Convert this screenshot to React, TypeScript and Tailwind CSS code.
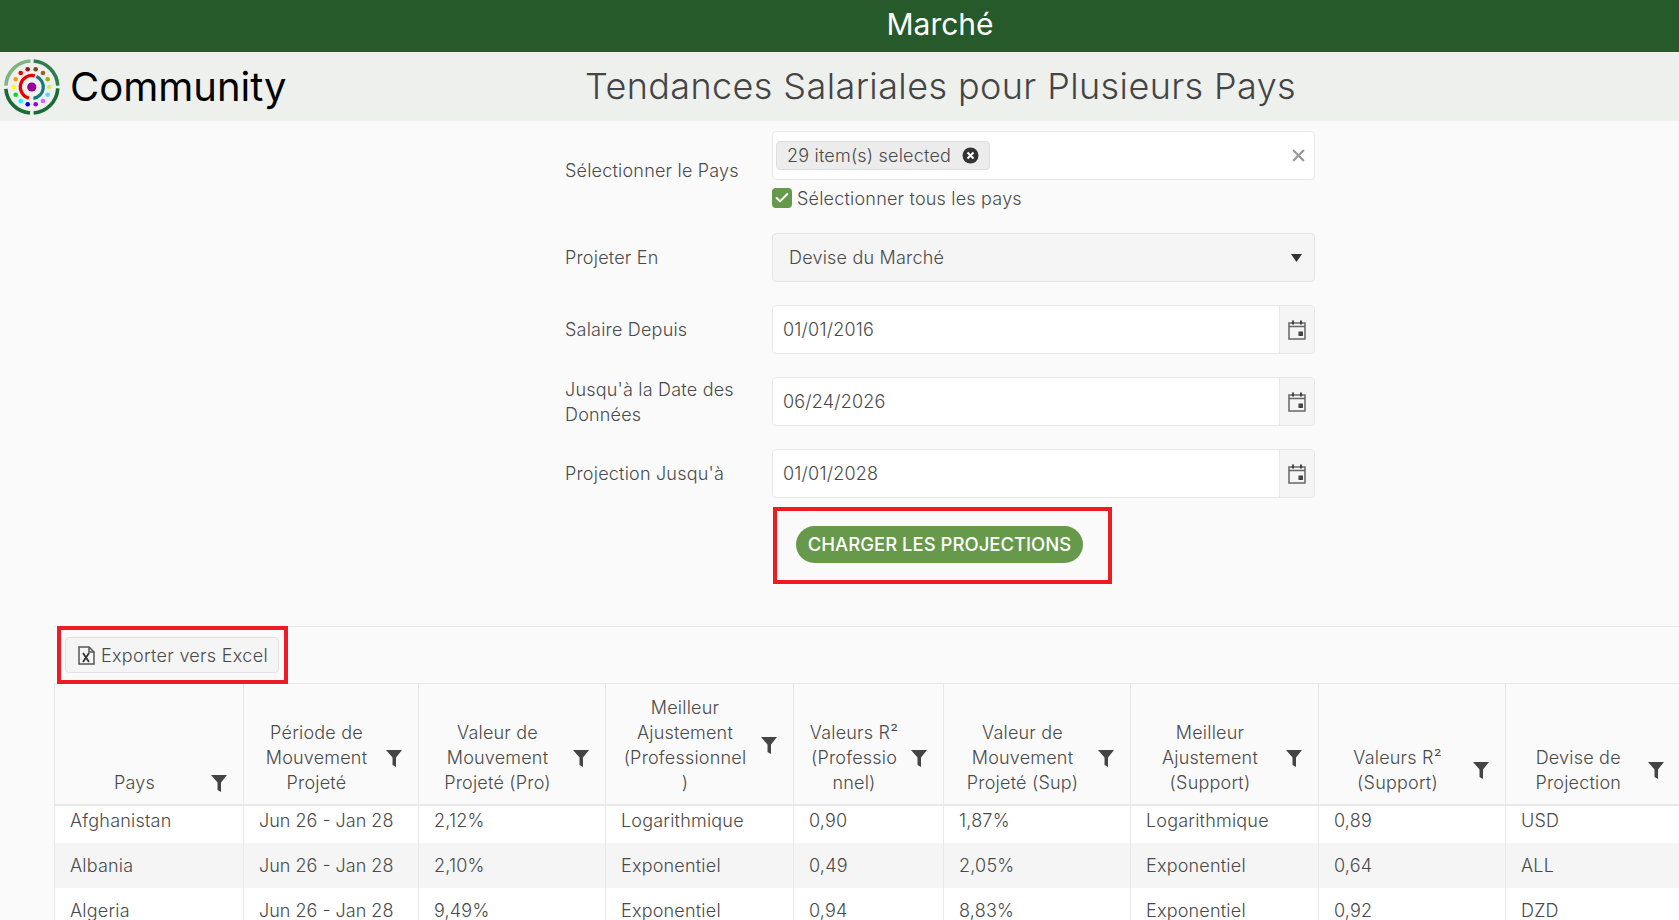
import React from "react";
import { Check, X } from "lucide-react";

const columns = [
    { width: "w-[189px]", lines: ["Pays"] },
    { width: "w-[175px]", lines: ["Période de", "Mouvement", "Projeté"] },
    { width: "w-[187px]", lines: ["Valeur de", "Mouvement", "Projeté (Pro)"] },
    { width: "w-[188px]", lines: ["Meilleur", "Ajustement", "(Professionnel", ")"] },
    { width: "w-[150px]", lines: ["Valeurs R²", "(Professio", "nnel)"] },
    { width: "w-[187px]", lines: ["Valeur de", "Mouvement", "Projeté (Sup)"] },
    { width: "w-[188px]", lines: ["Meilleur", "Ajustement", "(Support)"] },
    { width: "w-[187px]", lines: ["Valeurs R²", "(Support)"] },
    { width: "w-[174px]", lines: ["Devise de", "Projection"] },
];

const rows = [
    ["Afghanistan", "Jun 26 - Jan 28", "2,12%", "Logarithmique", "0,90", "1,87%", "Logarithmique", "0,89", "USD"],
    ["Albania", "Jun 26 - Jan 28", "2,10%", "Exponentiel", "0,49", "2,05%", "Exponentiel", "0,64", "ALL"],
    ["Algeria", "Jun 26 - Jan 28", "9,49%", "Exponentiel", "0,94", "8,83%", "Exponentiel", "0,92", "DZD"],
];

const arc = (r: number, from: number, to: number) => {
    const pt = (a: number) => {
        const rad = ((a - 90) * Math.PI) / 180;
        return `${(31.8 + r * Math.cos(rad)).toFixed(2)} ${(37 + r * Math.sin(rad)).toFixed(2)}`;
    };
    return `M${pt(from)} A${r} ${r} 0 ${to - from > 180 ? 1 : 0} 1 ${pt(to)}`;
};

const dots = [
    [27.7, 19.3, "#8b1a1a"],
    [35.7, 19.3, "#7a4a10"],
    [43, 23, "#8f6a1e"],
    [47.7, 29.3, "#99b300"],
    [49.3, 37, "#c8f060"],
    [47.7, 44.7, "#66ccff"],
    [43, 51, "#cc66ff"],
    [35.7, 54.3, "#9900cc"],
    [27.7, 54.3, "#0000ee"],
    [20.7, 51, "#00ffff"],
    [15.7, 44.7, "#00dd22"],
    [13.7, 37, "#ffff00"],
    [15.7, 29.3, "#ff9900"],
    [20.7, 23, "#ee0000"],
] as const;

const Logo = () => (
    <svg width="56" height="56" viewBox="4 9 56 56" className="shrink-0">
        <g fill="none" strokeWidth="3.6">
            <path d={arc(26, 4, 87)} stroke="#2f7d4c" />
            <path d={arc(26, 93, 176)} stroke="#1c6b36" />
            <path d={arc(26, 184, 266)} stroke="#1c6b36" />
            <path d={arc(26, 273, 357)} stroke="#7fb580" />
            <path d={arc(11.5, 195, 375)} stroke="#e60000" strokeWidth="3.2" />
            <path d={arc(11.5, 24, 172)} stroke="#14787a" strokeWidth="3.2" />
        </g>
        {dots.map(([cx, cy, fill]) => (
            <circle key={fill} cx={cx} cy={cy} r="2.3" fill={fill} />
        ))}
        <circle cx="31.8" cy="37" r="4.6" fill="#960096" />
    </svg>
);

const FilterIcon = () => (
    <svg width="16" height="18" viewBox="0 0 16 18" className="shrink-0" fill="#444444">
        <path d="M0 1h16L10 8.500V18l-3.500-2V8.500z" />
    </svg>
);

const CalendarIcon = () => (
    <svg width="18" height="20" viewBox="0 0 18 20" fill="none">
        <rect x="1" y="3" width="16" height="16" stroke="#666666" strokeWidth="1.500" />
        <path d="M1 6.500h16" stroke="#666666" strokeWidth="1.500" />
        <path d="M5 0.500v4M13 0.500v4" stroke="#444444" strokeWidth="2" />
        <rect x="10.500" y="11.500" width="4.500" height="4.500" fill="#444444" />
    </svg>
);

const ExcelIcon = () => (
    <svg width="17" height="19" viewBox="0 0 17 19" fill="none" className="shrink-0">
        <path d="M1 1h10l5 5v12H1z" stroke="#555555" strokeWidth="1.500" />
        <path d="M11 1v5h5" stroke="#555555" strokeWidth="1.500" />
        <path d="M5 7l6 9M11 7l-6 9" stroke="#333333" strokeWidth="1.800" />
    </svg>
);

const DateField = ({ value }: { value: string }) => (
    <div className="flex h-[49px] w-[543px] items-stretch overflow-hidden rounded border border-[#e8e8e8] bg-white">
        <div className="flex flex-1 items-center pl-[10px]">{value}</div>
        <div className="flex w-[35px] items-center justify-center border-l border-[#e8e8e8] bg-[#f5f5f5]">
            <CalendarIcon />
        </div>
    </div>
);

const App = () => {
    return (
        <div className="h-[920px] w-[1679px] overflow-hidden bg-[#fafafa] font-['Inter',sans-serif] text-[18px] font-light leading-[25px] tracking-[0.2px] text-[#4a4a4a]">
            <div className="flex h-[52px] items-center justify-center bg-[#265a2b] pb-[3px] pl-[201px] text-[30px] font-normal tracking-normal text-white">
                Marché
            </div>
            <div className="flex h-[69px] items-center bg-[#eef0ed]">
                <div className="flex w-[290px] items-center pl-1 text-[40px] font-normal tracking-normal text-black">
                    <Logo />
                    <span className="ml-[10px]">Community</span>
                </div>
                <div className="flex-1 pr-[88px] text-center text-[36px] tracking-[0.4px] text-[#444444]">
                    Tendances Salariales pour Plusieurs Pays
                </div>
            </div>

            <div className="ml-[565px] flex w-[750px] flex-col pt-[10px]">
                <div className="flex items-center">
                    <div className="w-[207px] pt-[2px]">Sélectionner le Pays</div>
                    <div className="w-[543px]">
                        <div className="flex h-[49px] items-center rounded border border-[#e8e8e8] bg-white pl-[3px] pr-[6px]">
                            <div className="flex h-[29px] w-[214px] items-center rounded border border-[#dddddd] bg-[#ececec] pl-[10px]">
                                <span>29 item(s) selected</span>
                                <svg width="17" height="17" viewBox="0 0 17 17" className="ml-auto mr-[10px]">
                                    <circle cx="8.500" cy="8.500" r="8" fill="#333333" />
                                    <path d="M5.500 5.500l6 6M11.500 5.500l-6 6" stroke="white" strokeWidth="2" />
                                </svg>
                            </div>
                            <X className="ml-auto text-[#999999]" size={19} strokeWidth={3} />
                        </div>
                        <div className="mt-2 flex h-5 items-center">
                            <div className="flex h-5 w-5 items-center justify-center rounded bg-[#66994a]">
                                <Check className="text-white" size={16} strokeWidth={3} />
                            </div>
                            <span className="ml-[5px]">Sélectionner tous les pays</span>
                        </div>
                    </div>
                </div>

                <div className="mt-[25px] flex h-[49px] items-center">
                    <div className="w-[207px]">Projeter En</div>
                    <div className="flex h-[49px] w-[543px] items-center rounded border border-[#e4e4e4] bg-[#f5f5f5] pl-4 pr-3">
                        Devise du Marché
                        <svg width="11" height="8" viewBox="0 0 11 8" className="ml-auto">
                            <path d="M0 0h11L5.500 8z" fill="#333333" />
                        </svg>
                    </div>
                </div>

                <div className="mt-[23px] flex h-[49px] items-center">
                    <div className="w-[207px]">Salaire Depuis</div>
                    <DateField value="01/01/2016" />
                </div>

                <div className="mt-[23px] flex h-[49px] items-center">
                    <div className="w-[207px] pt-px">
                        Jusqu'à la Date des
                        <br />
                        Données
                    </div>
                    <DateField value="06/24/2026" />
                </div>

                <div className="mt-[23px] flex h-[49px] items-center">
                    <div className="w-[207px]">Projection Jusqu'à</div>
                    <DateField value="01/01/2028" />
                </div>

                <div className="ml-[208px] mt-[9px] flex h-[77px] w-[339px] items-center border-4 border-[#ed1c24] pb-[2px] pl-[19px]">
                    <button className="h-[37px] w-[287px] rounded-full bg-[#66994a] pb-px text-[18.500px] font-medium tracking-normal text-white">
                        CHARGER LES PROJECTIONS
                    </button>
                </div>
            </div>

            <div className="ml-[54px] mt-[42px]">
                <div className="h-[58px] border-b border-t border-[#e8e8e8]">
                    <div className="-mt-px ml-[3px] flex h-[58px] w-[231px] items-center border-4 border-[#ed1c24] pl-1">
                        <button className="flex h-9 w-[214px] items-center rounded border border-[#e2e2e2] bg-[#f5f5f5] pl-[12px]">
                            <ExcelIcon />
                            <span className="ml-[6px] tracking-[0.3px]">Exporter vers Excel</span>
                        </button>
                    </div>
                </div>
                <table className="w-[1625px] table-fixed border-collapse">
                    <colgroup>
                        {columns.map((c, i) => (
                            <col key={i} className={c.width} />
                        ))}
                    </colgroup>
                    <thead>
                        <tr className="h-[121px] border-b-2 border-[#e8e8e8]">
                            {columns.map((c, i) => (
                                <th key={i} className="border-l border-[#e8e8e8] p-0 align-bottom font-light">
                                    <div className="flex items-center pb-[9px] pl-[15px] pr-4">
                                        <div className="min-w-0 flex-1 text-center">
                                            {c.lines.map((line, j) => (
                                                <div key={j} className="whitespace-nowrap">
                                                    {line}
                                                </div>
                                            ))}
                                        </div>
                                        <div className="ml-3">
                                            <FilterIcon />
                                        </div>
                                    </div>
                                </th>
                            ))}
                        </tr>
                    </thead>
                    <tbody>
                        {rows.map((row, i) => (
                            <tr
                                key={i}
                                className={i === 1 ? "h-[45px] bg-[#f5f5f5]" : i === 0 ? "h-[38px] bg-white" : "h-[45px] bg-white"}
                            >
                                {row.map((cell, j) => (
                                    <td
                                        key={j}
                                        className={
                                            (i === 0 ? "pb-[8px] pt-0 " : "") +
                                            (j === 1 ? "tracking-normal " : "") +
                                            "border-l border-[#e8e8e8] pl-[15px]"
                                        }
                                    >
                                        {cell}
                                    </td>
                                ))}
                            </tr>
                        ))}
                    </tbody>
                </table>
            </div>
        </div>
    );
};

export default App;
